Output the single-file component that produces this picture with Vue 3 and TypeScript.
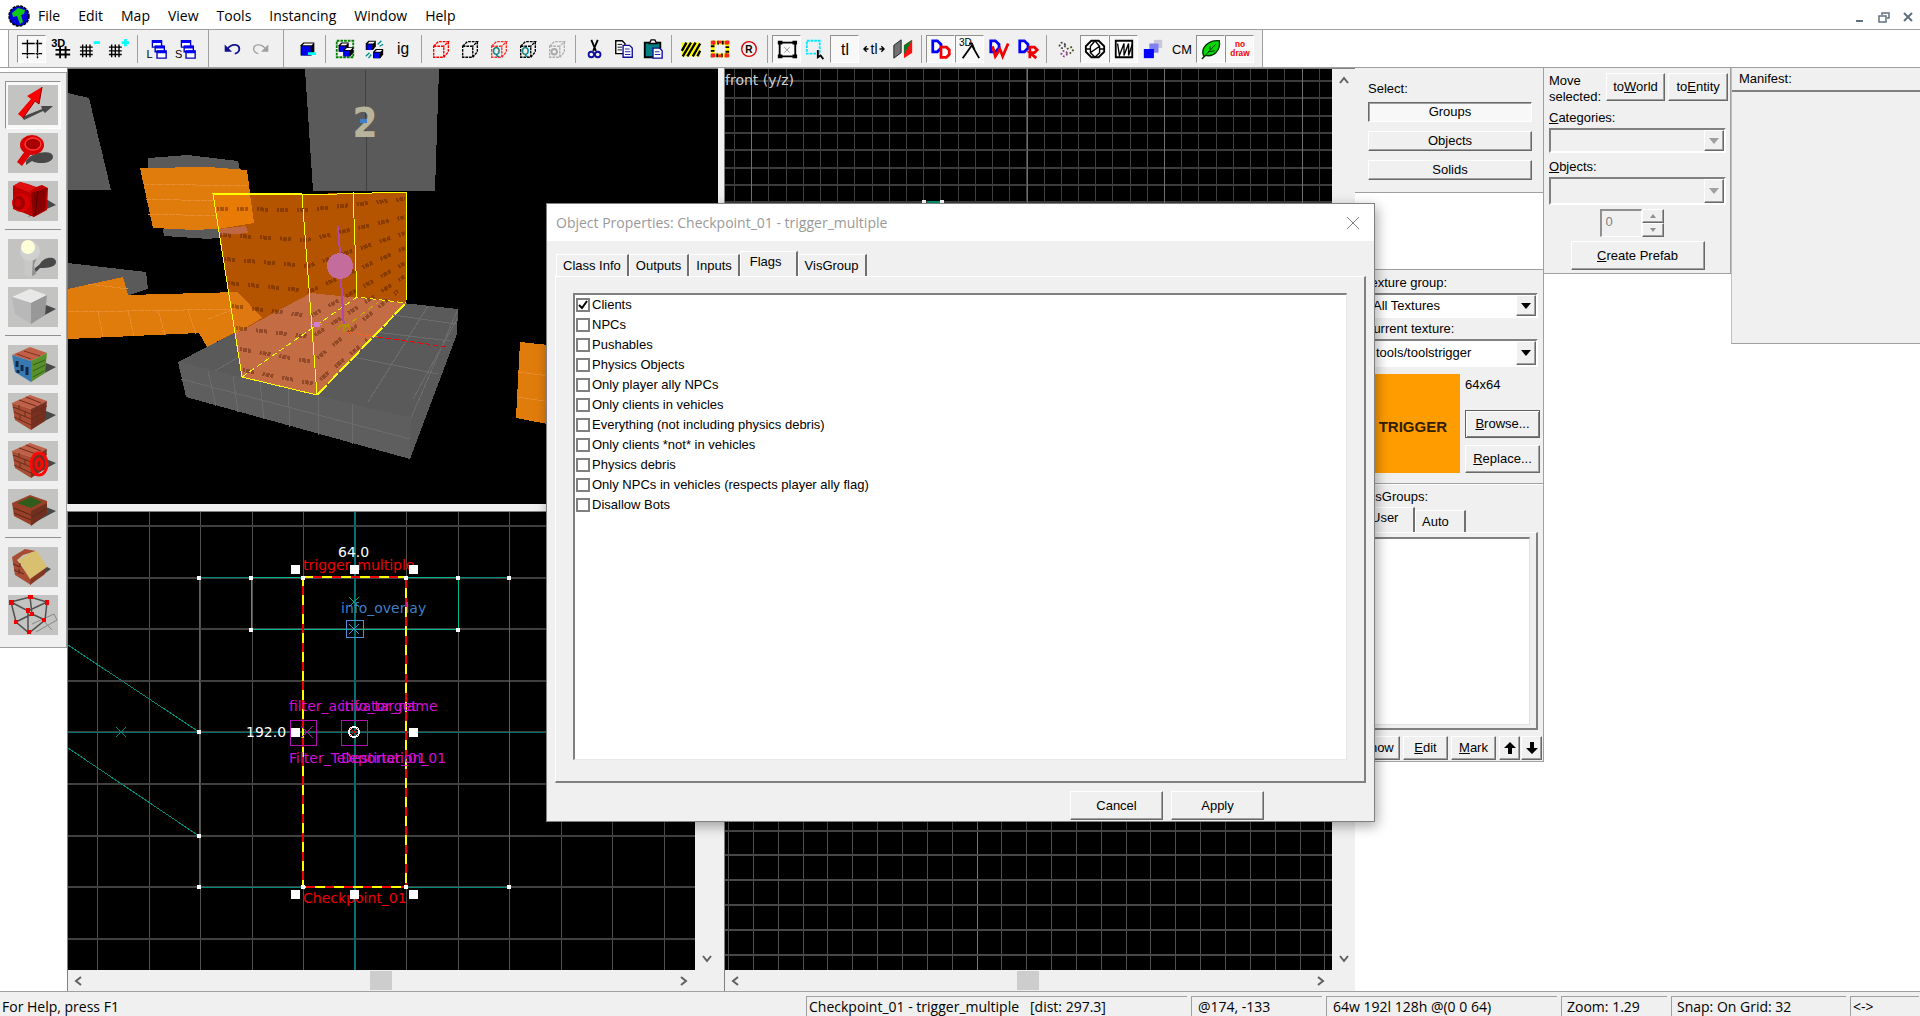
<script setup lang="ts">
import { ref } from 'vue'

interface Tool {
  name: string
  icon: string
  on?: boolean
}

const menus = ['File', 'Edit', 'Map', 'View', 'Tools', 'Instancing', 'Window', 'Help']

const txt = (x: number, y: number, size: number, s: string, fill = '#000', weight = 400) =>
  `<text x="${x}" y="${y}" font-size="${size}" font-weight="${weight}" fill="${fill}" text-anchor="middle" font-family="Liberation Sans, Arial, sans-serif">${s}</text>`

const dashedCube = (c: string) =>
  `<path d="M4 9h11v12H4zM4 9l5-5h11l-5 5M20 4v11l-5 6" fill="none" stroke="${c}" stroke-width="1.5" stroke-dasharray="3 1"/>`
const solidCube = (x: number, y: number, s: number) =>
  `<path d="M${x} ${y + 3}l3-3h${s}v${s - 2}l-3 4h-${s}z" fill="#000"/><path d="M${x + 1} ${y + 4}h${s - 2}v${s - 2}h-${s - 2}z" fill="#0000f0"/><path d="M${x + 2} ${y + 3}l2-2h${s - 2}l-2 2z" fill="#fff"/>`
const layers = (l: string) =>
  `<path d="M7 3h10v7H7zM10 9h10v6H10zM12 14h10v8H12z" fill="#fff" stroke="#0000b8" stroke-width="1.5"/><path d="M7 4h10M10 10h10M12 15h10" stroke="#0000ff" stroke-width="3"/>` + txt(4, 22, 12, l)
const dLetter = `<path d="M3 3h5l4 4v4l-4 4H3z" fill="#fff" stroke="#0000ff" stroke-width="3"/>`

const groups: Tool[][][] = [
  [
    [
      { name: 'Toggle grid', on: true, icon: '<path d="M7 2v20M18 2v20M1 6h22M1 17h22" stroke="#000" stroke-width="1.5" stroke-dasharray="14 1 2 1"/>' },
      { name: 'Toggle 3D grid', icon: txt(9, 10, 12, '3D', '#000', 700) + '<path d="M11 9v13M17 9v13M6 13h16M6 18h16" stroke="#000" stroke-width="2"/>' },
      { name: 'Smaller grid', icon: '<path d="M4 7v14M8 7v14M12 7v14M1 10h14M1 14h14M1 18h14" stroke="#000" stroke-width="1.5"/><path d="M16 5h7" stroke="#00ffff" stroke-width="3"/>' },
      { name: 'Larger grid', icon: '<path d="M4 7v14M8 7v14M12 7v14M1 10h14M1 14h14M1 18h14" stroke="#000" stroke-width="1.5"/><path d="M15 5h8M19 1v8" stroke="#00ffff" stroke-width="3"/>' },
    ],
    [
      { name: 'Load window state', icon: layers('L') },
      { name: 'Save window state', icon: layers('S') },
    ],
  ],
  [
    [
      { name: 'Undo', icon: '<path d="M7 12c5-7 13-5 13 0 0 3-3 5-5 5" fill="none" stroke="#101090" stroke-width="2"/><path d="M4 7v8h8z" fill="#101090"/>' },
      { name: 'Redo', icon: '<path d="M17 12c-5-7-13-5-13 0 0 3 3 5 5 5" fill="none" stroke="#a0a0a0" stroke-width="1.5"/><path d="M20 7v8h-8z" fill="#a0a0a0"/>' },
    ],
  ],
  [
    [{ name: 'Carve', icon: solidCube(5, 5, 12) + '<path d="M13 17h9" stroke="#00ffff" stroke-width="3"/>' }],
    [
      { name: 'Group', icon: '<path d="M3 3h18v18H3z" fill="none" stroke="#008000" stroke-width="2" stroke-dasharray="3 1"/>' + solidCube(5, 5, 8) + solidCube(10, 10, 8) },
      { name: 'Ungroup', icon: solidCube(3, 3, 8) + solidCube(11, 12, 8) + '<path d="M16 7l4-4M18 9l4-2M3 20l4-4M6 22l3-4" stroke="#009090" stroke-width="1.5"/>' },
      { name: 'Ignore groups', icon: txt(12, 17, 17, 'ig') },
    ],
    [
      { name: 'Hide selected', icon: dashedCube('#ff0000') },
      { name: 'Hide unselected', icon: dashedCube('#000') },
      { name: 'Quick hide selected', icon: dashedCube('#ff3030') + txt(9, 19, 11, 'Q', '#008080', 700) },
      { name: 'Quick hide unselected', icon: dashedCube('#000') + txt(9, 19, 11, 'Q', '#008080', 700) },
      { name: 'Show hidden', icon: dashedCube('#b0b0b0') + '<circle cx="9" cy="15" r="3" fill="none" stroke="#a8a8a8" stroke-width="2"/>' },
    ],
    [
      { name: 'Cut', icon: '<path d="M8 2l5 12M15 2l-5 12" stroke="#000" stroke-width="2"/><circle cx="8" cy="18" r="3" fill="none" stroke="#1010a0" stroke-width="2"/><circle cx="15" cy="18" r="3" fill="none" stroke="#1010a0" stroke-width="2"/>' },
      { name: 'Copy', icon: '<path d="M3 3h7l3 3v11H3z" fill="#fff" stroke="#000" stroke-width="1.5"/><path d="M5 7h5M5 10h5M5 13h5" stroke="#000"/><path d="M11 8h7l3 3v10H11z" fill="#fff" stroke="#1010a0" stroke-width="1.5"/><path d="M13 12h5M13 15h6M13 18h6" stroke="#1010a0"/>' },
      { name: 'Paste', icon: '<path d="M3 5h17v16H3z" fill="#008080" stroke="#000" stroke-width="2"/><path d="M8 6l2-4h4l2 4z" fill="#fff" stroke="#000" stroke-width="1.5"/><path d="M12 11h7l3 3v8H12z" fill="#fff" stroke="#1010a0" stroke-width="1.5"/><path d="M14 15h5M14 18h6" stroke="#1010a0"/>' },
    ],
    [
      { name: 'Cordon', icon: '<path d="M2 5h20v15H2z" fill="#ff0"/><path d="M2 14l5-9M3 20l9-15M8 20l9-15M14 20l8-14M19 20l3-6" stroke="#000" stroke-width="2.5"/>' },
      { name: 'Edit cordon', icon: '<path d="M4 5h16v14H4z" fill="#f0f0f0" stroke="#ff0" stroke-width="4"/><path d="M4 5h16v14H4z" fill="none" stroke="#000" stroke-width="4" stroke-dasharray="2 3"/><path d="M2 3h5v4H2zM17 3h5v4h-5zM2 17h5v4H2zM17 17h5v4h-5zM10 3h4v3h-4zM10 18h4v3h-4z" fill="#ff2020"/>' },
      { name: 'Radius culling', icon: '<circle cx="12" cy="12" r="8" fill="#f0f0f0" stroke="#e00000" stroke-width="1.5"/>' + txt(12, 16, 11, 'R', '#000', 700) },
    ],
    [
      { name: 'Select by handles', on: true, icon: '<path d="M4 5h17v15H4z" fill="none" stroke="#000" stroke-width="2"/><path d="M2 3h5v4H2zM18 3h5v4h-5zM2 18h5v4H2zM18 18h5v4h-5z"/><path d="M9 10l6 6M15 10l-6 6" stroke="#909090"/>' },
      { name: 'Auto selection', icon: '<path d="M2 3h14v14H2z" fill="none" stroke="#00e8ff" stroke-width="2" stroke-dasharray="3 1"/><path d="M14 13v8l3-2 3 4" fill="none" stroke="#000" stroke-width="2"/>' },
      { name: 'Texture lock', on: true, icon: txt(12, 18, 17, 'tl') },
      { name: 'Scale texture lock', icon: '<path d="M1 12h5M18 12h5M4 9l-3 3 3 3M20 9l3 3-3 3" fill="none" stroke="#000" stroke-width="1.5"/>' + txt(12, 17, 15, 'tl') },
      { name: 'Face alignment', icon: '<path d="M2 8l8-6v14l-8 6z" fill="#707070" stroke="#202020"/><path d="M13 8l9-6v14l-9 6z" fill="#ff1010"/><path d="M13 8l9-6L13 18z" fill="#087828"/>' },
    ],
    [
      { name: 'Displacement mask', on: true, icon: dLetter + '<path d="M12 10h6l3 3v5l-3 3h-6z" fill="#fff" stroke="#f00000" stroke-width="3"/>' },
      { name: '3D displacement', on: true, icon: txt(7, 9, 11, '3D') + '<path d="M4 22L14 8l8 14M11 6h3l3 7" fill="none" stroke="#000" stroke-width="2"/>' },
      { name: 'Displacement walkable', icon: dLetter + '<path d="M5 9l3 11 5-8 3 8 6-14" fill="none" stroke="#f00000" stroke-width="3"/>' },
      { name: 'Displacement remove', icon: dLetter + '<path d="M14 22V10h5l3 3-3 3h-5l7 6" fill="#fff" stroke="#f00000" stroke-width="3"/>' },
    ],
    [
      { name: 'Particles', icon: '<circle cx="8" cy="8" r="3" fill="none" stroke="#404040" stroke-dasharray="2 2" stroke-width="2"/><circle cx="10" cy="17" r="3" fill="none" stroke="#804080" stroke-dasharray="2 2" stroke-width="2"/><path d="M13 12l7-3M16 17l5-5" stroke="#505020" stroke-width="2" stroke-dasharray="2 2"/>' },
      { name: 'Models', on: true, icon: '<path d="M8 3h8l6 6v6l-6 6H8l-6-6V9z" fill="#fff" stroke="#000" stroke-width="2"/><path d="M12 3L7 9v7l5 5 5-5V9zM2 12h5M17 12h5M7 16l10-7" fill="none" stroke="#000" stroke-width="1.5"/>' },
      { name: 'Model fade', on: true, icon: '<path d="M3 3h18v18H3z" fill="#fff" stroke="#000" stroke-width="2"/><path d="M5 6l2 13 5-13v13l5-13v13l4-12" fill="none" stroke="#000" stroke-width="1.5"/>' },
      { name: 'Opacity', icon: '<path d="M13 2h9v9h-9z" fill="#c8c8d8"/><path d="M8 6h10v10H8z" fill="#8080f0"/><path d="M2 12h11v10H2z" fill="#0000ff"/>' },
      { name: 'Collision mesh', icon: txt(12, 17, 14, 'CM') },
      { name: 'Detail objects', on: true, icon: '<path d="M4 20C0 10 10 2 21 3c2 10-6 18-15 16l-4 4" fill="#08d808" stroke="#003000" stroke-width="1.5"/><path d="M4 21L17 7M9 15l7-1M11 9v4" fill="none" stroke="#003000"/>' },
      { name: 'No draw', on: true, icon: txt(12, 10, 9, 'no', '#f00000', 700) + txt(12, 20, 9, 'draw', '#f00000', 700) },
    ],
  ],
]

const shadow = (d: string) => `<path d="${d}" fill="#484848"/>`
const cubeIcon = (top: string, left: string, right: string, extra = '') =>
  shadow('M22 36l26-14-10-4z') +
  `<path d="M4 10l18-8 17 6-16 8z" fill="${top}"/><path d="M4 10l19 6v21L7 27z" fill="${left}"/><path d="M23 16l16-8-2 20-14 9z" fill="${right}"/>` + extra
const mortar = '<path d="M5 14l18 7M6 19l17 7M6 24l17 8M23 20l16-7M23 26l15-7M23 32l14-8M11 12v5M17 18v5M12 22v5M29 13v4M34 15v4M29 22v5M11 7l17 6M18 4l15 6" stroke="#6a2c1c" fill="none"/>'

const palette: Tool[][] = [
  [
    { name: 'Selection tool', on: true, icon: shadow('M14 32l20-8-1-3 12 0-8 7-2-2-19 9z') + '<path d="M10 29l5 4 12-17 4 3 3-17-15 9 4 3z" fill="#f80000"/><path d="M15 33l12-17 4 3 3-17" fill="none" stroke="#900000"/>' },
    { name: 'Magnify', icon: shadow('M18 28c5-9 27-12 27-4 0 6-14 8-21 4l-6 4z') + '<path d="M9 29l8-11 6 3-9 12z" fill="#e00000"/><ellipse cx="24" cy="12" rx="12" ry="10" fill="#d80000"/><ellipse cx="25" cy="11" rx="8" ry="6" fill="#a80000" stroke="#ff3838" stroke-width="1.5"/>' },
    { name: 'Camera', icon: shadow('M20 36l28-12-10-6z') + '<path d="M5 5l7-4 8 2 8 3 6-2 6 3-1 22-13 7-10-4-11-4z" fill="#c00000"/><path d="M5 5l7-4 16 5-7 5z" fill="#e01010"/><path d="M23 12l16-5-2 22-12 7z" fill="#880000"/><path d="M30 10l-3 24" stroke="#400000"/><ellipse cx="13" cy="22" rx="9" ry="9" fill="#d80000"/><ellipse cx="11" cy="22" rx="6" ry="7" fill="#a00000"/><ellipse cx="10" cy="22" rx="3" ry="4" fill="#c80000"/>' },
  ],
  [
    { name: 'Entity tool', icon: shadow('M20 35l12-10c4-8 16-8 16-2s-12 6-16 6l-8 8z') + '<path d="M16 34l1-8-2-8h14l-3 8 2 9c-4 3-9 3-12-1z" fill="#c8c8c8"/><path d="M25 18h4l-3 8 2 9-4 2z" fill="#909090"/><circle cx="22" cy="12" r="10" fill="#d0d0d0"/><circle cx="20" cy="8" r="7" fill="#ffffd8"/>' },
    { name: 'Block tool', icon: cubeIcon('#e8e8e8', '#b8b8b8', '#989898') },
  ],
  [
    { name: 'Texture application', icon: cubeIcon('#c06048', '#3878b0', '#58902c', '<path d="M9 16v6M14 20v6M19 22v8M10 25v3" stroke="#102848" stroke-width="3"/><path d="M25 20l12-5M25 26l12-6M25 32l11-6" stroke="#346018"/><path d="M9 9l14 5M16 6l16 5" stroke="#80341f"/>') },
    { name: 'Apply current texture', icon: cubeIcon('#c06048', '#a84c34', '#783020', mortar) },
    { name: 'Apply decals', icon: cubeIcon('#c06048', '#a84c34', '#783020', mortar + '<g fill="none" stroke="#ff0808" stroke-width="3"><ellipse cx="31" cy="23" rx="8" ry="11"/><ellipse cx="31" cy="23" rx="3" ry="5"/></g>') },
    { name: 'Apply overlays', icon: shadow('M22 36l26-14-10-4z') + '<path d="M4 14l18-8 17 6v12l-16 12L6 27z" fill="#984028"/><path d="M23 22l16-8v11l-16 12z" fill="#703020"/><path d="M9 14l14-6 11 5-11 6z" fill="#305c1c"/><path d="M6 19l17 7M6 24l17 7M24 28l14-8" stroke="#5c2418"/>' },
  ],
  [
    { name: 'Clipping tool', icon: shadow('M22 37l21-15-8-4z') + '<path d="M4 10l13-8 11 2-13 4-6 5 14 19v6L7 28z" fill="#a84c34"/><path d="M23 30l15-11-1 8-15 11z" fill="#843824"/><path d="M10 13l14-8 5-1 10 16-17 12z" fill="#d8c070"/><path d="M5 17l7 3M6 23l10 4M12 16v4M11 22v5" stroke="#602418"/>' },
    { name: 'Vertex tool', icon: '<path d="M24 29l22-10 3 6-21 12M32 22l12 13" fill="none" stroke="#888"/><path d="M3 7l19-5 17 5-2 18-16 13L8 27zM3 7l17 9 19-9M20 16v22M22 2l2 17-16 8M24 19l13 6" fill="none" stroke="#505050" stroke-width="1.5"/><path d="M1 5h5v5H1zM20 0h5v4h-5zM37 5h4v5h-4zM18 13h4v5h-4zM6 25h4v4H6zM34 23h4v4h-4zM19 35h4v4h-4zM22 17h4v4h-4z" fill="#f00000"/>' },
  ],
]

const flags = ref([
  { label: 'Clients', checked: true },
  { label: 'NPCs', checked: false },
  { label: 'Pushables', checked: false },
  { label: 'Physics Objects', checked: false },
  { label: 'Only player ally NPCs', checked: false },
  { label: 'Only clients in vehicles', checked: false },
  { label: 'Everything (not including physics debris)', checked: false },
  { label: 'Only clients *not* in vehicles', checked: false },
  { label: 'Physics debris', checked: false },
  { label: 'Only NPCs in vehicles (respects player ally flag)', checked: false },
  { label: 'Disallow Bots', checked: false },
])
const tabs = ['Class Info', 'Outputs', 'Inputs', 'Flags', 'VisGroup']
const tab = ref('Flags')
const selection = 'Checkpoint_01 - trigger_multiple   [dist: 297.3]'

const steps = (from: number, step: number, n: number) =>
  Array.from({ length: n }, (_, i) => Math.round(from + step * i))
const topX = steps(29, 51.5, 12)
const topY = steps(14, 51.6, 9)
const frontX = steps(9, 17.2, 36)
const frontY = steps(12, 17.3, 26)
const sideX = steps(3, 24.85, 25)
const sideY = steps(21, 24.8, 18)

const vertices = [
  [131, 66], [183, 66], [235, 66], [338, 66], [390, 66], [441, 66], [183, 118], [390, 118],
  [131, 220], [131, 324], [131, 375], [235, 375], [338, 375], [441, 375],
]
const handles = [
  [227, 57], [286, 57], [345, 57], [227, 220], [345, 220], [227, 382], [286, 382], [345, 382],
]

const brushRows = [
  'M149 140L238 141L337 130', 'M152 166L239 171L337 148', 'M156 190L240 197L337 164',
  'M160 214L242 222L337 179', 'M164 237L243 247L337 194', 'M168 259L244 268L337 207',
  'M172 280L245 293L330 222', 'M175 301L247 315L300 270',
]
</script>

<template>
  <div class="app">
    <header class="menubar">
      <svg class="logo" width="22" height="22" viewBox="0 0 22 22">
        <circle cx="11" cy="11" r="10" fill="#0000d8" stroke="#000" stroke-width="1.5" stroke-dasharray="3 1" />
        <path d="M4 8l6-5 7 2-1 4-3 1 2 7-3 2-3-8-4 1z" fill="#10c818" />
      </svg>
      <nav class="menus"><button v-for="m in menus" :key="m" type="button">{{ m }}</button></nav>
      <div class="winbtns">
        <button type="button" aria-label="Minimize"><svg width="12" height="12"><path d="M2 10h7" stroke="#607080" stroke-width="2" /></svg></button>
        <button type="button" aria-label="Restore"><svg width="12" height="12"><path d="M4 4V2h7v5H9M1 5h7v6H1z" fill="none" stroke="#607080" stroke-width="1.5" /></svg></button>
        <button type="button" aria-label="Close"><svg width="12" height="12"><path d="M2 2l8 8M10 2l-8 8" stroke="#607080" stroke-width="2" /></svg></button>
      </div>
    </header>

    <div class="toolbars">
      <div v-for="(bar, b) in groups" :key="b" class="bar">
        <div v-for="(g, i) in bar" :key="i" class="group">
          <button v-for="t in g" :key="t.name" type="button" class="tool" :class="{ on: t.on }" :aria-label="t.name">
            <svg width="22" height="22" viewBox="0 0 24 24" v-html="t.icon"></svg>
          </button>
        </div>
      </div>
    </div>

    <main class="workspace">
      <aside class="rail">
        <div class="palette">
          <div v-for="(g, i) in palette" :key="i" class="pgroup">
            <button v-for="t in g" :key="t.name" type="button" class="ptool" :class="{ on: t.on }" :aria-label="t.name">
              <svg width="50" height="40" viewBox="0 0 50 40" v-html="t.icon"></svg>
            </button>
          </div>
        </div>
      </aside>

      <section class="views">
        <div class="view camera">
          <svg class="canvas">
            <g fill="#5a5a5a">
              <path d="M0 24L21 29L43 121H0zM237 0H371L367 122H245z" />
              <path d="M80 89L120 86L170 92L172 101H80zM95 160L96 167L141 170L180 164L178 157z" />
              <path d="M0 194L78 203L80 220L61 226H0z" />
              <path d="M110 293L243 224L390 240L389 265L342 390L118 328z" />
            </g>
            <path d="M110 293L343 349L342 390L118 328z" fill="#5e5e5e" />
            <path d="M297 0L299 122" stroke="#404040" />
            <path d="M140 302L148 337M165 307L170 343M192 312L196 350M220 319L222 358M250 326L251 366M284 335L284 375M113 310L342 370M345 330L389 250M147 302L260 235M300 333L360 237M343 349L390 240M270 285L370 305M300 262L382 272M318 245L388 255" fill="none" stroke="#6c6c6c" />
            <g fill="#e07c0c">
              <path d="M72 99L141 98L179 101L186 154L161 159L127 161L85 159z" />
              <path d="M0 220L55 208L60 226L170 223L194 249L139 278L131 264L0 270z" />
              <path d="M452 273L490 277V357L448 349z" />
            </g>
            <path d="M75 115L180 117M77 130L182 133M80 145L184 148M0 243L175 240M30 243L35 268M60 242L66 267M90 241L97 266M120 241L128 265M140 250L180 235M20 215L60 220M450 303L490 308M449 328L490 334" fill="none" stroke="#e88e30" stroke-dasharray="6 1" />
            <path d="M145 125L234 125L339 123L338 234L249 326L174 308z" fill="#b45400" />
            <path d="M145 125L182 125L186 154L150 160z" fill="#e87a06" />
            <path d="M150 160L178 157L180 164L151 166z" fill="#c06844" />
            <path d="M160 223L170 223L194 249L167 265z" fill="#df7810" />
            <path d="M243 224L338 234L249 326L174 308L167 265z" fill="#c46c44" />
            <path v-for="r in brushRows" :key="r" :d="r" fill="none" stroke="#4a1800" stroke-width="4" stroke-dasharray="2 1 4 1 3 9" opacity=".4" />
            <g fill="none" stroke="#ffff00">
              <path d="M174 308L145 125L234 126L339 123L338 234M234 126L249 326M285 123L289 228M174 308L249 326" />
              <path d="M145 125H234" stroke-width="2" />
              <path d="M249 326L338 234" stroke-width="2" stroke-dasharray="14 2" />
              <path d="M174 308L289 228L338 234" stroke-dasharray="6 3" />
            </g>
            <path d="M276 259L310 233" stroke="#c0b000" stroke-dasharray="6 4" />
            <path d="M280 263L310 268" stroke="#ff6020" stroke-dasharray="6 3" />
            <path d="M310 268L380 278" stroke="#f00000" stroke-dasharray="5 3" />
            <path d="M270 157L272 184M273 210L276 260" stroke="#b048a8" stroke-width="2" />
            <circle cx="272" cy="197" r="13" fill="#c46c9c" />
            <path d="M270 261a6 5 0 0 1 12 0M276 255v8" fill="none" stroke="#b09000" stroke-width="2" />
            <path d="M242 255h12M246 253h5v4h-5z" fill="#d080c8" stroke="#d080c8" />
            <text class="number" x="297" y="68" text-anchor="middle">2</text>
            <path d="M292 50h7v4h-7z" fill="#3f7fc8" />
          </svg>
        </div>

        <div class="view">
          <div class="pane">
            <svg class="canvas">
              <path v-for="x in frontX" :key="'x' + x" :d="`M${x} 0V900`" stroke="#404040" />
              <path v-for="y in frontY" :key="'y' + y" :d="`M0 ${y}H1200`" stroke="#3c3c3c" stroke-width="2" />
              <path d="M26 0V900M302 0V900M439 0V900M577 0V900" stroke="#707070" />
              <path d="M164 0V900" stroke="#006060" />
              <path d="M202 133h14" stroke="#009070" stroke-width="3" />
              <path d="M197 131h4v5h-4zM215 131h4v5h-4z" fill="#fff" />
              <text class="viewname" x="0" y="16">front (y/z)</text>
            </svg>
            <div class="vbar">
              <svg width="12" height="12"><path d="M2 9l4-5 4 5" fill="none" stroke="#606060" stroke-width="2" /></svg>
            </div>
          </div>
        </div>

        <div class="view">
          <div class="pane">
            <svg class="canvas">
              <path v-for="x in topX" :key="'x' + x" :d="`M${x} 0V900`" stroke="#505050" />
              <path v-for="y in topY" :key="'y' + y" :d="`M0 ${y}H1200`" stroke="#404040" stroke-width="2" />
              <path d="M286 0V900M0 220H1200" stroke="#007070" />
              <g fill="none" stroke="#008878">
                <path d="M131 65H441V375H131z" />
                <path d="M0 133L131 220M0 236L131 324M48 215l10 10M58 215l-10 10" />
                <path d="M183 65H390V117H183z" stroke="#00b890" />
                <path d="M281 85l10 10M291 85l-10 10" stroke="#00a880" />
              </g>
              <path d="M235 65H338V375H235z" fill="none" stroke="#f00000" stroke-width="2" />
              <path d="M235 65H338V375H235z" fill="none" stroke="#ffff00" stroke-width="2" stroke-dasharray="10 9" />
              <g font-size="14">
                <g fill="#d010d0">
                  <text x="221" y="199">filter_activator_name</text>
                  <text x="273" y="199">info_target</text>
                  <text x="221" y="251">Filter_Teleporter_01</text>
                  <text x="273" y="251">Destination_01</text>
                </g>
                <text x="235" y="58" fill="#f00000">trigger_multiple</text>
                <text x="235" y="391" fill="#f00000">Checkpoint_01</text>
                <text x="273" y="101" fill="#3f7fc8">info_overlay</text>
                <text x="270" y="45" fill="#fff">64.0</text>
                <text x="178" y="225" fill="#fff">192.0</text>
              </g>
              <path d="M222 208h26v25h-26zM273 208h26v25h-26zM233 214l12 12M245 214l-12 12" fill="none" stroke="#b010b0" />
              <path d="M278 108h17v17h-17zM281 112l10 10M291 112l-10 10" fill="none" stroke="#4f8fd8" />
              <path v-for="v in vertices" :key="v.join()" :d="`M${v[0] - 2} ${v[1] - 2}h4v4h-4z`" fill="#fff" />
              <path v-for="h in handles" :key="h.join()" :d="`M${h[0] - 4} ${h[1] - 4}h9v9h-9z`" fill="#fff" />
              <circle cx="286" cy="220" r="5" fill="none" stroke="#fff" stroke-width="2" />
              <path d="M282 216l8 8M290 216l-8 8" stroke="#e00000" />
            </svg>
            <div class="vbar end">
              <svg width="12" height="12"><path d="M2 3l4 5 4-5" fill="none" stroke="#606060" stroke-width="2" /></svg>
            </div>
          </div>
          <div class="hbar">
            <svg width="12" height="12"><path d="M9 2L4 6l5 4" fill="none" stroke="#606060" stroke-width="2" /></svg>
            <span class="track"><i></i></span>
            <svg width="12" height="12"><path d="M3 2l5 4-5 4" fill="none" stroke="#606060" stroke-width="2" /></svg>
          </div>
        </div>

        <div class="view">
          <div class="pane">
            <svg class="canvas">
              <path v-for="x in sideX" :key="'x' + x" :d="`M${x} 0V900`" :stroke="x === 251 || x === 252 ? '#787878' : '#505050'" />
              <path v-for="y in sideY" :key="'y' + y" :d="`M0 ${y}H1200`" stroke="#484848" stroke-width="2" />
              <path d="M450 0V900" stroke="#007070" />
            </svg>
            <div class="vbar end">
              <svg width="12" height="12"><path d="M2 3l4 5 4-5" fill="none" stroke="#606060" stroke-width="2" /></svg>
            </div>
          </div>
          <div class="hbar">
            <svg width="12" height="12"><path d="M9 2L4 6l5 4" fill="none" stroke="#606060" stroke-width="2" /></svg>
            <span class="track"><i></i></span>
            <svg width="12" height="12"><path d="M3 2l5 4-5 4" fill="none" stroke="#606060" stroke-width="2" /></svg>
          </div>
        </div>
      </section>

      <aside class="side">
        <div class="col first">
          <section class="panel select">
            <p>Select:</p>
            <button type="button" class="btn slim pressed">Groups</button>
            <button type="button" class="btn slim">Objects</button>
            <button type="button" class="btn slim">Solids</button>
          </section>

          <section class="panel texture">
            <label for="tgroup">Texture group:</label>
            <div class="combo">
              <select id="tgroup"><option>All Textures</option></select>
              <span class="drop"><svg width="10" height="6"><path d="M0 0h10L5 6z" /></svg></span>
            </div>
            <label for="tcur">Current texture:</label>
            <div class="combo tall">
              <select id="tcur"><option>tools/toolstrigger</option></select>
              <span class="drop"><svg width="10" height="6"><path d="M0 0h10L5 6z" /></svg></span>
            </div>
            <div class="swrow">
              <div class="swatch">TRIGGER</div>
              <div class="swside">
                <span>64x64</span>
                <button type="button" class="btn focus"><u>B</u>rowse...</button>
                <button type="button" class="btn"><u>R</u>eplace...</button>
              </div>
            </div>
          </section>

          <section class="panel vis">
            <p>VisGroups:</p>
            <div class="vtabs">
              <button type="button" class="tab active">User</button>
              <button type="button" class="tab">Auto</button>
            </div>
            <div class="vpage"><div class="vlist"></div></div>
            <div class="vbtns">
              <button type="button" class="btn"><u>S</u>how</button>
              <button type="button" class="btn"><u>E</u>dit</button>
              <button type="button" class="btn"><u>M</u>ark</button>
              <div class="arrows">
                <button type="button" class="btn arrow" aria-label="Move up"><svg width="12" height="14"><path d="M6 1l6 6H8v6H4V7H0z" /></svg></button>
                <button type="button" class="btn arrow" aria-label="Move down"><svg width="12" height="14"><path d="M6 13l6-6H8V1H4v6H0z" /></svg></button>
              </div>
            </div>
          </section>
        </div>

        <div class="col second">
          <section class="panel entity">
            <div class="moverow">
              <span>Move selected:</span>
              <button type="button" class="btn">to<u>W</u>orld</button>
              <button type="button" class="btn">to<u>E</u>ntity</button>
            </div>
            <label for="cat"><u>C</u>ategories:</label>
            <div class="combo off">
              <select id="cat" disabled></select>
              <span class="drop"><svg width="10" height="6"><path d="M0 0h10L5 6z" /></svg></span>
            </div>
            <label for="obj"><u>O</u>bjects:</label>
            <div class="combo tall off">
              <select id="obj" disabled></select>
              <span class="drop"><svg width="10" height="6"><path d="M0 0h10L5 6z" /></svg></span>
            </div>
            <div class="spin">
              <input type="text" value="0" disabled aria-label="Count" />
              <div>
                <button type="button" class="btn" disabled aria-label="Increase"><svg width="6" height="4"><path d="M3 0l3 4H0z" fill="#909090" /></svg></button>
                <button type="button" class="btn" disabled aria-label="Decrease"><svg width="6" height="4"><path d="M0 0h6L3 4z" fill="#909090" /></svg></button>
              </div>
            </div>
            <button type="button" class="btn prefab"><u>C</u>reate Prefab</button>
          </section>
        </div>

        <div class="col third">
          <section class="manifest">
            <p>Manifest:</p>
            <div class="mlist"></div>
          </section>
        </div>
      </aside>
    </main>

    <footer class="status">
      <span class="help">For Help, press F1</span>
      <span class="cell sel">{{ selection }}</span>
      <span class="cell pos">@174, -133</span>
      <span class="cell size">64w 192l 128h @(0 0 64)</span>
      <span class="cell zoom">Zoom: 1.29</span>
      <span class="cell snap">Snap: On Grid: 32</span>
      <span class="cell nav">&lt;-&gt;</span>
    </footer>

    <div class="dialog" role="dialog" aria-labelledby="dlg-title">
      <div class="titlebar">
        <span id="dlg-title">Object Properties: Checkpoint_01 - trigger_multiple</span>
        <button type="button" aria-label="Close"><svg width="14" height="14"><path d="M1 1l12 12M13 1L1 13" stroke="#808080" /></svg></button>
      </div>
      <div class="dbody">
        <div class="tabs">
          <button v-for="t in tabs" :key="t" type="button" class="tab" :class="{ active: t === tab }" @click="tab = t">{{ t }}</button>
        </div>
        <div class="page">
          <div class="flags">
            <label v-for="f in flags" :key="f.label"><input v-model="f.checked" type="checkbox" />{{ f.label }}</label>
          </div>
        </div>
        <div class="actions">
          <button type="button" class="btn">Cancel</button>
          <button type="button" class="btn">Apply</button>
        </div>
      </div>
    </div>
  </div>
</template>

<style>
body {
  margin: 0;
  background: #fff;
}
</style>

<style scoped>
* {
  box-sizing: border-box;
}
.app {
  position: relative;
  display: flex;
  flex-direction: column;
  min-height: 100vh;
  overflow: hidden;
  color: #000;
  font: 13px/16px 'Liberation Sans', Arial, sans-serif;
}
p {
  margin: 0;
}
svg {
  display: block;
}
button {
  padding: 0;
  border: 0;
  background: none;
  color: inherit;
  font: inherit;
}
.menubar {
  display: flex;
  align-items: center;
  height: 30px;
  padding: 2px 6px 0 8px;
  border-bottom: 1px solid #a0a0a0;
  background: #fff;
}
.menus {
  display: flex;
  flex: 1;
  gap: 18px;
  margin-left: 8px;
  font: 14px/20px 'Open Sans', 'Noto Sans', sans-serif;
}
.winbtns {
  display: flex;
  gap: 12px;
  padding-top: 2px;
}
.toolbars {
  display: flex;
  height: 38px;
  padding-left: 8px;
  border-bottom: 1px solid #a0a0a0;
}
.bar {
  display: flex;
  align-items: center;
  padding: 0 8px;
  border-left: 1px solid #a0a0a0;
  background: #f0f0f0;
}
.bar:last-child {
  border-right: 1px solid #a0a0a0;
}
.group {
  display: flex;
}
.group + .group {
  margin-left: 4px;
  padding-left: 4px;
  border-left: 1px solid #a0a0a0;
}
.tool {
  display: grid;
  place-items: center;
  width: 29px;
  height: 28px;
}
.tool.on,
.ptool.on {
  border: 1px solid;
  border-color: #909090 #fff #fff #909090;
  background: #f8f8f8;
}
.workspace {
  display: flex;
  flex: 1;
  min-height: 0;
  background: #fff;
  border-bottom: 1px solid #a0a0a0;
}
.rail {
  width: 67px;
  padding-top: 4px;
}
.palette {
  padding: 8px 5px;
  border: solid #a0a0a0;
  border-width: 1px 1px 1px 0;
  background: #f0f0f0;
}
.pgroup + .pgroup {
  margin-top: 4px;
  padding-top: 5px;
  border-top: 1px solid #909090;
}
.ptool {
  display: grid;
  place-items: center;
  width: 56px;
  height: 48px;
}
.ptool svg {
  background: #c3c3c1;
}
.views {
  display: grid;
  flex: 1;
  grid-template-columns: 651fr 631fr;
  grid-template-rows: 436fr 481fr;
  gap: 7px 6px;
  min-width: 0;
  background: #f0f0f0;
}
.view {
  display: flex;
  flex-direction: column;
  min-width: 0;
  border: solid #808080;
  border-width: 1px 0 0 1px;
}
.camera {
  background: #000;
}
.pane {
  display: flex;
  flex: 1;
  min-height: 0;
}
.canvas {
  flex: 1;
  width: 100%;
  min-width: 0;
  height: auto;
  overflow: hidden;
  background: #000;
  shape-rendering: crispEdges;
  font-family: 'DejaVu Sans', sans-serif;
}
.number {
  fill: #b8b49c;
  font: bold 40px 'Liberation Sans Narrow', 'DejaVu Sans Condensed', sans-serif;
}
.viewname {
  fill: #d0d0d0;
  font-size: 14px;
}
.vbar {
  display: flex;
  justify-content: center;
  width: 23px;
  padding: 5px 0;
  background: #f0f0f0;
}
.vbar.end {
  align-items: flex-end;
}
.hbar {
  display: flex;
  align-items: center;
  height: 21px;
  padding: 0 28px 0 4px;
  background: #f0f0f0;
}
.track {
  display: flex;
  flex: 1;
  justify-content: center;
}
.track i {
  width: 22px;
  height: 19px;
  background: #cdcdcd;
}
.side {
  display: flex;
  width: 565px;
}
.col {
  border-right: 1px solid #a0a0a0;
}
.first {
  width: 189px;
  align-self: flex-start;
}
.second {
  width: 187px;
  align-self: flex-start;
}
.third {
  flex: 1;
  border-right: 0;
}
.panel {
  border-bottom: 1px solid #a0a0a0;
  background: #f0f0f0;
}
.btn {
  border: 1px solid;
  border-color: #fff #696969 #696969 #fff;
  background: #f0f0f0;
  box-shadow: inset -1px -1px #a0a0a0;
}
.btn.pressed {
  border-color: #696969 #fff #fff #696969;
  background: #f8f8f8;
  box-shadow: inset 1px 1px #a0a0a0;
}
.btn.focus {
  border-color: #606060;
  box-shadow: inset 1px 1px #fff, inset -1px -1px #808080;
}
.select {
  display: flex;
  flex-direction: column;
  height: 125px;
  padding: 13px 11px 0 13px;
}
.select p {
  margin-bottom: 5px;
}
.slim {
  height: 20px;
  margin-bottom: 9px;
  line-height: 16px;
}
.texture {
  height: 215px;
  margin-top: 76px;
  padding: 4px 5px 0 9px;
  border-top: 1px solid #a0a0a0;
}
.texture label {
  display: block;
  height: 19px;
  line-height: 18px;
}
.combo {
  position: relative;
  height: 25px;
  border: 2px solid;
  border-color: #808080 #fff #fff #808080;
  background: #fff;
}
.combo.tall {
  height: 28px;
}
.texture .combo {
  margin-bottom: 2px;
}
.combo select {
  width: 100%;
  height: 100%;
  padding: 0 0 0 7px;
  border: 0;
  appearance: none;
  background: transparent;
  color: #000;
  font: inherit;
  opacity: 1;
}
.combo.tall select {
  padding-left: 10px;
}
.drop {
  position: absolute;
  top: 0;
  right: 0;
  bottom: 0;
  display: grid;
  place-items: center;
  width: 20px;
  border: 1px solid;
  border-color: #fff #696969 #696969 #fff;
  background: #f0f0f0;
  box-shadow: inset -1px -1px #a0a0a0;
  pointer-events: none;
}
.off {
  background: #f0f0f0;
}
.off .drop {
  fill: #a0a0a0;
}
.swrow {
  display: flex;
  gap: 5px;
  margin-top: 7px;
  margin-right: -2px;
}
.swatch {
  display: flex;
  flex: 1;
  align-items: center;
  justify-content: flex-end;
  height: 99px;
  padding: 6px 13px 0 0;
  background: #ff9c00;
  color: #302000;
  font: bold 15px/18px 'Liberation Sans', Arial, sans-serif;
}
.swside {
  display: flex;
  flex-direction: column;
  width: 75px;
}
.swside span {
  height: 36px;
  padding-top: 3px;
}
.swside .btn {
  height: 28px;
}
.swside .btn + .btn {
  margin-top: 7px;
}
.vis {
  height: 277px;
  margin-top: 1px;
  padding: 4px 0 0 9px;
}
.vtabs {
  display: flex;
  align-items: flex-end;
  height: 27px;
}
.tab {
  height: 22px;
  padding: 0 6px;
  border: solid;
  border-width: 1px 2px 0 1px;
  border-color: #fff #707070 #fff #fff;
  background: #f0f0f0;
}
.tab.active {
  height: 25px;
  padding-bottom: 4px;
}
.vtabs .tab {
  width: 51px;
  text-align: left;
}
.vpage {
  height: 198px;
  margin-right: 5px;
  padding: 4px 6px 3px 4px;
  border: solid;
  border-width: 1px 2px 2px 1px;
  border-color: #fff #808080 #808080 #fff;
}
.vlist {
  height: 100%;
  border: solid;
  border-width: 2px 1px 1px 2px;
  border-color: #808080 #e0e0e0 #e0e0e0 #808080;
  background: #fff;
}
.vbtns {
  display: flex;
  justify-content: flex-end;
  gap: 3px;
  margin-top: 6px;
  margin-right: 1px;
}
.vbtns .btn {
  flex-shrink: 0;
  width: 45px;
  height: 24px;
}
.arrows {
  display: flex;
  gap: 1px;
}
.vbtns .arrow {
  display: grid;
  place-items: center;
  width: 21px;
}
.entity {
  display: flex;
  flex-direction: column;
  height: 206px;
  padding: 5px 4px 0 5px;
}
.moverow {
  display: flex;
  gap: 3px;
  height: 37px;
  margin-right: -2px;
}
.moverow span {
  width: 54px;
}
.moverow .btn {
  width: 60px;
  height: 28px;
}
.entity label {
  height: 18px;
}
.entity .combo {
  margin-bottom: 6px;
}
.entity .combo.tall {
  margin-bottom: 4px;
}
.spin {
  display: flex;
  align-self: center;
  height: 28px;
  margin-right: 12px;
}
.spin input {
  width: 42px;
  padding: 0 4px 4px;
  border: solid;
  border-width: 2px 1px 1px 2px;
  border-color: #909090 #fff #fff #909090;
  background: #f0f0f0;
  color: #808080;
  font: inherit;
}
.spin div {
  display: flex;
  flex-direction: column;
}
.spin .btn {
  display: grid;
  flex: 1;
  place-items: center;
  width: 22px;
}
.prefab {
  align-self: center;
  width: 134px;
  height: 29px;
  margin-top: 4px;
}
.manifest {
  display: flex;
  flex-direction: column;
  height: 276px;
  border-bottom: 1px solid #a0a0a0;
  border-left: 1px solid #c0c0c0;
  background: #f0f0f0;
}
.manifest p {
  padding: 3px 7px;
}
.mlist {
  flex: 1;
  border-top: 2px solid #808080;
}
.status {
  display: flex;
  gap: 4px;
  height: 24px;
  padding: 4px 1px 0 2px;
  background: #f0f0f0;
  font: 14px/20px 'Open Sans', 'Noto Sans', sans-serif;
}
.help {
  flex: 1;
  padding-top: 1px;
}
.cell {
  padding-left: 2px;
  border: solid #a0a0a0;
  border-width: 1px 0 0 1px;
  white-space: pre;
}
.sel {
  width: 381px;
}
.pos {
  width: 131px;
  padding-left: 6px;
}
.size {
  width: 231px;
  padding-left: 6px;
}
.zoom {
  width: 106px;
  padding-left: 5px;
}
.snap {
  width: 175px;
  padding-left: 5px;
}
.nav {
  width: 69px;
}
.dialog {
  position: absolute;
  top: 203px;
  left: 546px;
  width: 829px;
  border: 1px solid #808080;
  background: #f0f0f0;
  box-shadow: 2px 4px 12px rgba(0, 0, 0, 0.35);
}
.titlebar {
  display: flex;
  align-items: center;
  justify-content: space-between;
  height: 37px;
  padding: 0 14px 0 9px;
  background: #fff;
  color: #999;
  font: 14px/20px 'Open Sans', 'Noto Sans', sans-serif;
}
.dbody {
  padding: 10px 8px 0;
}
.tabs {
  display: flex;
  align-items: flex-end;
  height: 25px;
  padding-left: 1px;
}
.page {
  padding: 16px 17px 21px;
  border: solid;
  border-width: 1px 2px 2px 1px;
  border-color: #fff #808080 #808080 #fff;
}
.tabs .active {
  padding: 0 14px 4px 9px;
}
.tabs .tab:not(.active) {
  padding: 0 6px;
}
.flags {
  display: flex;
  flex-direction: column;
  height: 467px;
  border: solid;
  border-width: 2px 1px 1px 2px;
  border-color: #808080 #e8e8e8 #e8e8e8 #808080;
  background: #fff;
}
.flags label {
  display: flex;
  align-items: center;
  height: 20px;
}
.flags input {
  width: 14px;
  height: 14px;
  margin: 0 2px 0 1px;
  border: 2px solid #808080;
  appearance: none;
  background: #fff;
}
.flags input:checked {
  background: #fff url("data:image/svg+xml,%3Csvg xmlns='http://www.w3.org/2000/svg' viewBox='0 0 10 10'%3E%3Cpath d='M1 5l3 3 5-7' fill='none' stroke='%23000' stroke-width='2'/%3E%3C/svg%3E");
}
.actions {
  display: flex;
  justify-content: flex-end;
  gap: 8px;
  padding: 8px 102px 1px 0;
}
.actions .btn {
  width: 93px;
  height: 29px;
}
</style>
